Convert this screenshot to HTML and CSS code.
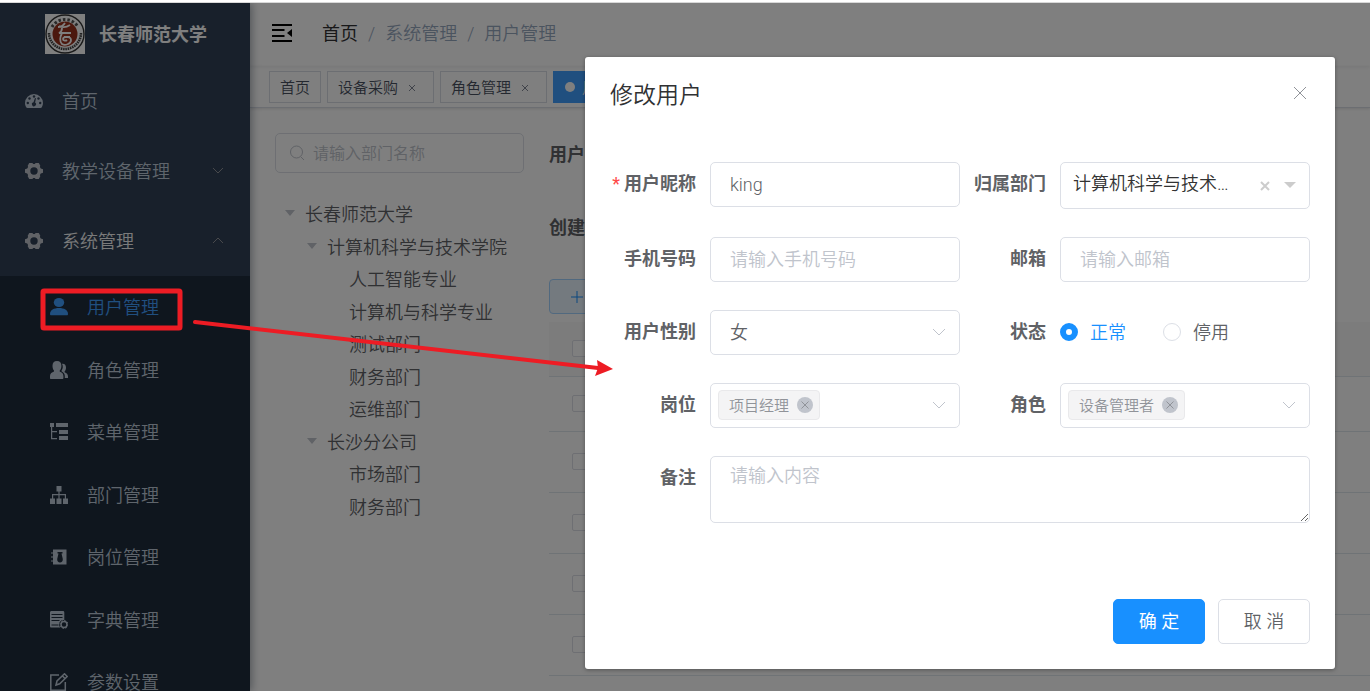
FILE: index.html
```html
<!DOCTYPE html>
<html lang="zh-CN">
<head>
  <meta charset="UTF-8">
  <meta name="viewport" content="width=device-width, initial-scale=1.0">
  <title>用户管理</title>
  <link rel="stylesheet" href="styles.css">
</head>
<body>

<div class="app">
  <aside class="sidebar">
    <a class="logo" href="#">
      <svg class="logo-img" viewBox="0 0 40 40">
        <rect width="40" height="40" fill="#fff"/>
        <circle cx="20" cy="20" r="19" fill="none" stroke="#333" stroke-width="1.4"/>
        <path d="M7 13A15 15 0 0 1 33 13" fill="none" stroke="#555" stroke-width="3" stroke-dasharray="2.500 2"/>
        <path d="M4 19A16 16 0 0 0 36 19" fill="none" stroke="#444" stroke-width="2.500" stroke-dasharray="1.600 .7"/>
        <circle cx="20" cy="20" r="12.500" fill="#98301c"/>
        <path d="M20 9c-2 3-5 4-7 4M14 12c4 2 8 1 11-1M17 14c0 3-1 4-3 5h12M17 19c-2 4-3 8 0 11 3 2 9 0 9-4 0-4-8-4-8-1 0 2 3 2 4 1M19 23h6" fill="none" stroke="#fff" stroke-width="1.800"/>
      </svg>
      <span>长春师范大学</span>
    </a>
    <nav>
      <ul class="menu">
        <li><a href="#">
          <svg class="icon" viewBox="0 0 18 18"><path fill="currentColor" d="M9 2a9 9 0 0 0-9 9c0 1.700.5 3 1.200 4.200.3.500.6.800 1.300.8h13c.7 0 1-.3 1.300-.8A8 8 0 0 0 18 11a9 9 0 0 0-9-9z"/><g fill="#304156"><circle cx="9" cy="4.500" r="1.200"/><circle cx="4.500" cy="6.500" r="1.200"/><circle cx="13.500" cy="6.500" r="1.200"/><circle cx="2.800" cy="11" r="1.200"/><circle cx="15.200" cy="11" r="1.200"/><path d="M10 6l1 .3-.9 4.300a2 2 0 1 1-1.600-.3z"/></g></svg>
          <span>首页</span></a></li>
        <li><a href="#">
          <svg class="icon gear" viewBox="0 0 18 18"><path fill="currentColor" fill-rule="evenodd" d="M4.200 1h3.200l.8.900h1.600l.8-.9h3.200l1.500 2.800-.4 1.300.9 1.500 2.200.6v3.600l-2.200.6-.9 1.500.4 1.300-1.500 2.800h-3.200l-.8-.9H8.200l-.8.900H4.200l-1.500-2.800.4-1.300-.9-1.500L0 10.800V7.200l2.200-.6.9-1.500-.4-1.300zM9 5.300a3.700 3.700 0 1 0 0 7.400 3.700 3.700 0 0 0 0-7.400z"/></svg>
          <span>教学设备管理</span>
          <svg class="arrow" viewBox="0 0 12 12"><path d="M1 3l5 5 5-5"/></svg></a></li>
        <li class="opened"><a href="#">
          <svg class="icon gear" viewBox="0 0 18 18"><path fill="currentColor" fill-rule="evenodd" d="M4.200 1h3.200l.8.900h1.600l.8-.9h3.200l1.500 2.800-.4 1.300.9 1.500 2.200.6v3.600l-2.200.6-.9 1.500.4 1.300-1.500 2.800h-3.200l-.8-.9H8.200l-.8.900H4.200l-1.500-2.800.4-1.300-.9-1.500L0 10.800V7.200l2.200-.6.9-1.500-.4-1.300zM9 5.300a3.700 3.700 0 1 0 0 7.400 3.700 3.700 0 0 0 0-7.400z"/></svg>
          <span>系统管理</span>
          <svg class="arrow" viewBox="0 0 12 12"><path d="M1 8l5-5 5 5"/></svg></a></li>
      </ul>
      <ul class="submenu">
        <li class="active"><a href="#">
          <svg class="icon" viewBox="0 0 18 18"><g fill="currentColor"><ellipse cx="9" cy="4.500" rx="5.200" ry="4.500"/><path d="M0 16c0-4 4-6 9-6s9 2 9 6c0 1-.4 1.300-1.200 1.300H1.200C.4 17.300 0 17 0 16z"/></g></svg>
          <span>用户管理</span></a></li>
        <li><a href="#">
          <svg class="icon" viewBox="0 0 18 18"><g fill="currentColor"><path d="M7 0c3 0 4.400 2 4.400 4.700 0 2-.6 3.800-1.700 4.900v1c2 .8 3.700 2 3.700 4.400V17c0 .6-.4 1-1 1H1c-.6 0-1-.4-1-1v-2c0-2.400 2-3.600 4-4.400v-1C3 8.500 2.500 6.700 2.500 4.700 2.500 2 4 0 7 0z"/><path d="M12 2.700c2.500-.3 4 1 4 3.800 0 1.800-.5 3-1.400 4v.8c2 .8 3.400 2 3.400 4.200V17h-3.200v-2c0-2-1.200-3.400-3.300-4.700v-.6c1.500-2 1.800-5 .5-7z"/></g></svg>
          <span>角色管理</span></a></li>
        <li><a href="#">
          <svg class="icon" viewBox="0 0 18 18"><g fill="currentColor"><path d="M0 0h4v4H0zM6 0h12v4H6zM9 7h9v4H9zM9 13h9v4H9z"/><path d="M1 4h1.200v11H7v1.200H1zM2 8h5v1.200H2z"/></g></svg>
          <span>菜单管理</span></a></li>
        <li><a href="#">
          <svg class="icon" viewBox="0 0 18 18"><path fill="currentColor" d="M6.500 0h5v5.500H9.600V8H16v4.500h2V18h-5v-5.500h1.800V9.200H9.600v3.300h1.900V18h-5v-5.500h1.900V9.200H3.200v3.300H5V18H0v-5.500h2V8h6.400V5.500H6.500z"/></svg>
          <span>部门管理</span></a></li>
        <li><a href="#">
          <svg class="icon" viewBox="0 0 18 18"><path fill="currentColor" d="M3 1.500h13.500v15H3z"/><g stroke="currentColor" stroke-width="1.200"><path d="M1 5h3M1 9h3M1 13h3"/></g><path fill="#1f2d3d" d="M7.500 4h5v1.500h-1l1.300 5.500c.2 2-1 3.500-2.800 3.500S7 13 7.200 11l1.300-5.500h-1z"/></svg>
          <span>岗位管理</span></a></li>
        <li><a href="#">
          <svg class="icon" viewBox="0 0 18 18"><path fill="currentColor" d="M0 1.500C0 .6.600 0 1.500 0H13c.8 0 1.300.6 1.300 1.500V9a4.500 4.500 0 0 0-4 7.500h-9C.5 16.500 0 16 0 15z"/><path d="M1.500 3.500h11M1.500 6.500h11M1.500 9.500h8M1.500 14h7" stroke="#1f2d3d"/><circle cx="14" cy="13.500" r="3" fill="none" stroke="currentColor" stroke-width="1.500" /><circle cx="14" cy="13.500" r="4" fill="none" stroke="currentColor" stroke-dasharray="1.500 1.600"/></svg>
          <span>字典管理</span></a></li>
        <li><a href="#">
          <svg class="icon" viewBox="0 0 18 18"><g fill="none" stroke="currentColor" stroke-width="1.500"><path d="M9 2H.8v15.200h14.500V9"/><path d="M6 12l1-4 7.500-7.200 2.700 2.700-7.500 7.300zM12.500 3l2.500 2.500"/></g></svg>
          <span>参数设置</span></a></li>
      </ul>
    </nav>
  </aside>

  <main class="main">
    <header class="navbar">
      <svg class="hamburger" viewBox="0 0 20 18"><path d="M0 1h20M0 6h12.500M0 12h12.500M0 17h20" stroke="#000" stroke-width="1.800"/><path d="M20 5v8l-5-4z"/></svg>
      <div class="breadcrumb"><a href="#">首页</a><i>/</i><span>系统管理</span><i>/</i><span>用户管理</span></div>
    </header>
    <div class="tags-view">
      <a class="tab" href="#">首页</a>
      <a class="tab" href="#">设备采购<svg viewBox="0 0 8 8"><path d="M1 1l6 6M7 1L1 7"/></svg></a>
      <a class="tab" href="#">角色管理<svg viewBox="0 0 8 8"><path d="M1 1l6 6M7 1L1 7"/></svg></a>
      <a class="tab active" href="#">用</a>
    </div>

    <div class="content">
      <section class="dept">
        <div class="search">
          <svg viewBox="0 0 16 16"><circle cx="7.500" cy="7" r="6"/><path d="M12 12l3 3"/></svg>
          <input type="text" placeholder="请输入部门名称" aria-label="部门名称">
        </div>
        <ul class="tree">
          <li class="parent">长春师范大学</li>
          <li class="parent level-2">计算机科学与技术学院</li>
          <li class="level-3">人工智能专业</li>
          <li class="level-3">计算机与科学专业</li>
          <li class="level-3">测试部门</li>
          <li class="level-3">财务部门</li>
          <li class="level-3">运维部门</li>
          <li class="parent level-2">长沙分公司</li>
          <li class="level-3">市场部门</li>
          <li class="level-3">财务部门</li>
        </ul>
      </section>
      <section class="users">
        <div class="filter">用户</div>
        <div class="filter">创建</div>
        <button class="btn-add" type="button" aria-label="新增"><svg viewBox="0 0 12 12"><path d="M6 0v12M0 6h12"/></svg></button>
        <table class="table">
          <thead><tr><th><input type="checkbox" aria-label="全选"></th></tr></thead>
          <tbody>
            <tr class="short"><td><input type="checkbox" aria-label="选择"></td></tr>
            <tr><td><input type="checkbox" aria-label="选择"></td></tr>
            <tr><td><input type="checkbox" aria-label="选择"></td></tr>
            <tr><td><input type="checkbox" aria-label="选择"></td></tr>
            <tr><td><input type="checkbox" aria-label="选择"></td></tr>
          </tbody>
        </table>
      </section>
    </div>
  </main>

  <div class="mask">
    <form class="dialog" role="dialog" aria-labelledby="dialogTitle">
      <div class="dialog-header">
        <h2 id="dialogTitle">修改用户</h2>
        <button class="dialog-close" type="button" aria-label="关闭"><svg viewBox="0 0 14 14"><path d="M1 1l12 12M13 1L1 13"/></svg></button>
      </div>
      <div class="form">
        <div class="item">
          <label class="required" for="nickName">用户昵称</label>
          <input class="control" id="nickName" type="text" value="king">
        </div>
        <div class="item">
          <label for="dept">归属部门</label>
          <div class="select dept-select">
            <select class="control" id="dept"><option>计算机科学与技术学院</option></select>
            <svg class="clear" viewBox="0 0 10 10"><path d="M1 1l8 8M9 1L1 9"/></svg>
            <svg class="caret" viewBox="0 0 12 6"><path d="M0 0h12L6 6z"/></svg>
          </div>
        </div>
        <div class="item">
          <label for="phone">手机号码</label>
          <input class="control" id="phone" type="text" placeholder="请输入手机号码">
        </div>
        <div class="item">
          <label for="email">邮箱</label>
          <input class="control" id="email" type="text" placeholder="请输入邮箱">
        </div>
        <div class="item">
          <label for="sex">用户性别</label>
          <div class="select">
            <select class="control" id="sex"><option>女</option><option>男</option></select>
            <svg class="chevron" viewBox="0 0 14 8"><path d="M1 1l6 6 6-6"/></svg>
          </div>
        </div>
        <div class="item">
          <span class="label">状态</span>
          <div class="radios">
            <label><input type="radio" name="status" checked><span>正常</span></label>
            <label><input type="radio" name="status"><span>停用</span></label>
          </div>
        </div>
        <div class="item">
          <label for="post">岗位</label>
          <div class="select">
            <select class="control" id="post"><option></option></select>
            <span class="tag">项目经理<svg viewBox="0 0 16 16"><circle cx="8" cy="8" r="8"/><path d="M4.500 4.500l7 7M11.500 4.500l-7 7"/></svg></span>
            <svg class="chevron" viewBox="0 0 14 8"><path d="M1 1l6 6 6-6"/></svg>
          </div>
        </div>
        <div class="item">
          <label for="role">角色</label>
          <div class="select">
            <select class="control" id="role"><option></option></select>
            <span class="tag">设备管理者<svg viewBox="0 0 16 16"><circle cx="8" cy="8" r="8"/><path d="M4.500 4.500l7 7M11.500 4.500l-7 7"/></svg></span>
            <svg class="chevron" viewBox="0 0 14 8"><path d="M1 1l6 6 6-6"/></svg>
          </div>
        </div>
        <div class="item wide">
          <label for="remark">备注</label>
          <textarea class="control" id="remark" placeholder="请输入内容"></textarea>
        </div>
      </div>
      <div class="dialog-footer">
        <button class="btn primary" type="submit">确 定</button>
        <button class="btn" type="button">取 消</button>
      </div>
    </form>
  </div>
</div>

<!-- 标注 -->
<svg class="annotation" aria-hidden="true">
  <rect x="43" y="291" width="137" height="37" rx="1" fill="none" stroke="#ed1c24" stroke-width="5"/>
  <path d="M195 322L598 368" stroke="#ed1c24" stroke-width="4" stroke-linecap="round"/>
  <path d="M597 360l16 9-18 7 3-8z" fill="#ed1c24"/>
</svg>

</body>
</html>
```

FILE: styles.css
```css
* { box-sizing: border-box; margin: 0; padding: 0; }
body {
  font-family: Roboto, 'Noto Sans CJK SC', sans-serif;
  font-size: 18px;
  font-weight: 350;
  color: #606266;
  background: #fff;
  padding-top: 2px;
  height: 100vh;
  overflow: hidden;
}
a { color: inherit; text-decoration: none; }
ul { list-style: none; }
input, select, textarea, button { font: inherit; color: inherit; }
svg { flex: none; }

.app {
  position: relative;
  display: flex;
  height: 100%;
  border-top: 1px solid #d8d8d8;
  overflow: hidden;
}

/* sidebar */
.sidebar {
  width: 250px;
  flex: none;
  background: #304156;
  box-shadow: 2px 0 8px rgba(0,21,41,0.35);
  color: #bfcbd9;
  z-index: 1;
}
.sidebar span { padding-bottom: 2px; }
.logo {
  display: flex;
  align-items: center;
  gap: 14px;
  height: 62px;
  margin-bottom: 1px;
  padding-left: 45px;
  color: #fff;
  font-weight: bold;
}
.logo-img { width: 40px; height: 40px; }
.menu a, .submenu a {
  display: flex;
  align-items: center;
  gap: 19px;
  height: 100%;
  padding: 0 26px 0 25px;
}
.menu li { height: 70px; }
.menu .opened { color: #f4f4f5; }
.icon { width: 18px; height: 18px; }
.gear { color: #c0c4cc; }
.arrow {
  width: 12px;
  height: 12px;
  margin-left: auto;
  fill: none;
  stroke: #909399;
}
.submenu {
  display: grid;
  grid-auto-rows: 62px 63px;
  background: #1f2d3d;
}
.submenu a { padding-left: 50px; }
.submenu .active { color: #409eff; }

/* main */
.main {
  flex: 1;
  min-width: 0;
  background: #fff;
}
.navbar {
  display: flex;
  align-items: center;
  gap: 30px;
  height: 63px;
  padding: 0 22px 4px;
  box-shadow: 0 1px 4px rgba(0,21,41,0.08);
}
.hamburger { width: 20px; height: 18px; }
.breadcrumb { color: #97a8be; padding-bottom: 1px; }
.breadcrumb a { color: #303133; font-weight: 400; }
.breadcrumb i {
  font-style: normal;
  margin: 0 10px;
}
.tags-view {
  display: flex;
  gap: 6px;
  height: 42px;
  padding: 5px 19px;
  border-bottom: 1px solid #d8dce5;
  box-shadow: 0 1px 3px rgba(0,0,0,0.12);
}
.tab {
  display: flex;
  align-items: center;
  height: 32px;
  padding: 0 10px 2px;
  border: 1px solid #d8dce5;
  font-size: 15px;
  color: #495060;
  white-space: nowrap;
}
.tab svg {
  width: 8px;
  height: 8px;
  margin: 4px 7px 0 10px;
  stroke: #808695;
}
.tab.active {
  background: #409eff;
  border-color: #409eff;
  color: #fff;
}
.tab.active::before {
  content: "";
  width: 10px;
  height: 10px;
  margin: 2px 7px 0 1px;
  border-radius: 50%;
  background: #fff;
}
.content {
  display: flex;
  gap: 25px;
  padding: 25px 0 0 25px;
}
.dept { width: 249px; flex: none; }
.search {
  display: flex;
  align-items: center;
  gap: 8px;
  height: 40px;
  padding: 0 13px;
  border: 1px solid #dcdfe6;
  border-radius: 5px;
  font-size: 16px;
}
.search svg {
  width: 16px;
  height: 16px;
  fill: none;
  stroke: #c0c4cc;
}
.search input {
  width: 100%;
  border: none;
  background: none;
  outline: none;
}
::placeholder { color: #c0c4cc; opacity: 1; }
.tree {
  display: grid;
  grid-auto-rows: 32px 33px;
  margin-top: 24px;
}
.tree li {
  display: flex;
  align-items: center;
}
.tree .parent { padding-left: 10px; }
.tree .parent::before {
  content: "";
  margin-right: 10px;
  border: 5px solid transparent;
  border-top: 6px solid #c0c4cc;
  border-bottom: none;
}
.tree .level-2.parent { padding-left: 32px; }
.tree .level-3 { padding-left: 74px; }

.users { flex: 1; }
.filter {
  height: 45px;
  margin-bottom: 28px;
  line-height: 44px;
  font-weight: bold;
}
.btn-add {
  display: block;
  width: 92px;
  height: 35px;
  padding-left: 21px;
  border: 1px solid #a3d3ff;
  border-radius: 4px;
  background: #e8f4ff;
  text-align: left;
}
.btn-add svg {
  width: 12px;
  height: 12px;
  stroke: #1890ff;
}
.table {
  width: 100%;
  margin-top: 8px;
  border-collapse: collapse;
}
.table th, .table td {
  height: 61px;
  padding-left: 23px;
  border-bottom: 1px solid #dfe6ec;
  text-align: left;
}
.table th { height: 54px; background: #f8f8f9; }
.table .short td { height: 55px; }
.table input {
  appearance: none;
  display: block;
  width: 17px;
  height: 17px;
  border: 1px solid #dcdfe6;
  border-radius: 2px;
  background: #fff;
}

/* dialog */
.mask {
  position: absolute;
  inset: 0;
  z-index: 10;
  display: flex;
  justify-content: flex-end;
  align-items: flex-start;
  padding: 54px 35px 0;
  background: rgba(0,0,0,0.5);
}
.dialog {
  width: 750px;
  padding: 25px;
  background: #fff;
  border-radius: 3px;
  box-shadow: 0 1px 4px rgba(0,0,0,0.35);
}
.dialog-header {
  display: flex;
  justify-content: space-between;
  height: 80px;
}
.dialog-header h2 {
  font-size: 23px;
  font-weight: 350;
  line-height: 28px;
  color: #303133;
}
.dialog-close {
  width: 20px;
  height: 24px;
  border: none;
  background: none;
  line-height: 20px;
}
.dialog-close svg {
  width: 14px;
  height: 14px;
  stroke: #909399;
}
.form {
  display: grid;
  grid-template-columns: 1fr 1fr;
  row-gap: 28px;
}
.item {
  display: flex;
  align-items: flex-start;
}
.item.wide { grid-column: 1 / 3; }
.item > label, .label {
  width: 100px;
  flex: none;
  padding-right: 14px;
  line-height: 44px;
  text-align: right;
  font-weight: bold;
  white-space: nowrap;
}
.required::before {
  content: "*";
  margin-right: 4px;
  color: #ff4949;
  font-weight: 400;
}
.control {
  display: block;
  flex: 1;
  width: 100%;
  min-width: 0;
  height: 45px;
  padding: 0 19px 1px;
  border: 1px solid #dcdfe6;
  border-radius: 5px;
  background: #fff;
  outline: none;
}
.select {
  position: relative;
  flex: 1;
  min-width: 0;
}
.select select { appearance: none; }
.select svg { stroke: #c0c4cc; fill: none; }
.chevron {
  position: absolute;
  top: 18px;
  right: 14px;
  width: 14px;
  height: 8px;
}
.dept-select .control {
  height: 47px;
  padding: 0 70px 4px 12px;
  color: #333;
  text-overflow: ellipsis;
  white-space: nowrap;
  overflow: hidden;
}
.dept-select .clear {
  position: absolute;
  top: 19px;
  right: 40px;
  width: 10px;
  height: 10px;
  stroke: #ccc;
  stroke-width: 2;
}
.dept-select .caret {
  position: absolute;
  top: 20px;
  right: 14px;
  width: 12px;
  height: 6px;
  fill: #ccc;
  stroke: none;
}
.tag {
  position: absolute;
  top: 7px;
  left: 8px;
  display: flex;
  align-items: center;
  gap: 8px;
  height: 30px;
  padding: 0 6px 1px 10px;
  border: 1px solid #e9e9eb;
  border-radius: 4px;
  background: #f4f4f5;
  color: #909399;
  font-size: 15px;
}
.tag svg { width: 16px; height: 16px; stroke: #909399; }
.tag circle { fill: #c0c4cc; stroke: none; }
.radios {
  display: flex;
  gap: 37px;
  height: 44px;
}
.radios label {
  display: flex;
  align-items: center;
  gap: 12px;
}
.radios span { padding-bottom: 2px; }
.radios input {
  appearance: none;
  width: 18px;
  height: 18px;
  border: 1px solid #dcdfe6;
  border-radius: 50%;
  background: #fff;
}
.radios input:checked { border: 6px solid #1890ff; }
.radios input:checked + span { color: #1890ff; }
textarea.control {
  height: 67px;
  padding: 4px 19px;
  resize: vertical;
}
.dialog-footer {
  display: flex;
  justify-content: flex-end;
  gap: 13px;
  margin-top: 76px;
}
.btn {
  width: 92px;
  height: 45px;
  padding-bottom: 4px;
  border: 1px solid #dcdfe6;
  border-radius: 5px;
  background: #fff;
}
.btn.primary {
  background: #1890ff;
  border-color: #1890ff;
  color: #fff;
  font-weight: 400;
}

.annotation {
  position: absolute;
  top: 0;
  left: 0;
  z-index: 20;
  width: 100%;
  height: 100%;
  pointer-events: none;
}
```
